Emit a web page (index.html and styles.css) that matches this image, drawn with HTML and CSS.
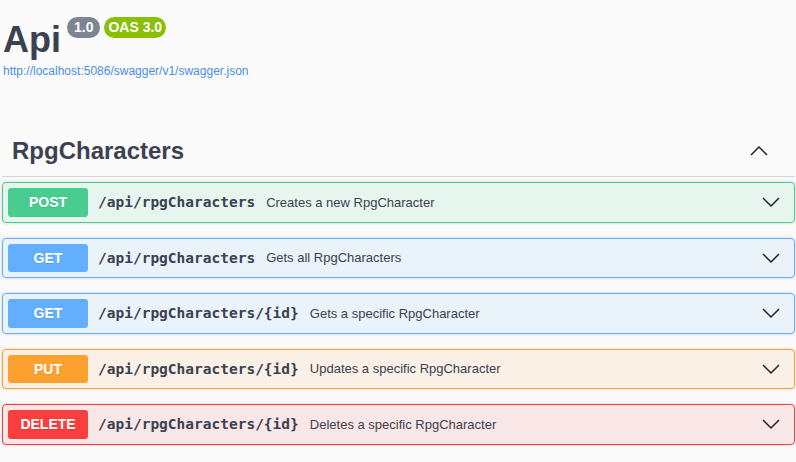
FILE: index.html
```html
<!DOCTYPE html>
<html>
<head>
<meta charset="utf-8">
<link rel="stylesheet" href="styles.css">
</head>
<body>
<div class="page">
  <div class="info">
    <h2 class="title">Api <span class="ver"><small class="badge gray">1.0</small><small class="badge green">OAS 3.0</small></span></h2>
    <a class="url" href="#">http://localhost:5086/swagger/v1/swagger.json</a>
  </div>
  <div class="tag">
    <h3 class="tag-title">RpgCharacters</h3>
    <svg class="arrow-up" width="20" height="20" viewBox="0 0 20 20"><path d="M2 14 L10 6 L18 14" fill="none" stroke="#222" stroke-width="1.5"/></svg>
  </div>
  <div class="ops">
    <div class="op post"><span class="method">POST</span><span class="path">/api/rpgCharacters</span><span class="desc">Creates a new RpgCharacter</span><svg class="arrow" width="20" height="20" viewBox="0 0 20 20"><path d="M2 6 L10 14 L18 6" fill="none" stroke="#222" stroke-width="1.5"/></svg></div>
    <div class="op get"><span class="method">GET</span><span class="path">/api/rpgCharacters</span><span class="desc">Gets all RpgCharacters</span><svg class="arrow" width="20" height="20" viewBox="0 0 20 20"><path d="M2 6 L10 14 L18 6" fill="none" stroke="#222" stroke-width="1.5"/></svg></div>
    <div class="op get"><span class="method">GET</span><span class="path">/api/rpgCharacters/{id}</span><span class="desc">Gets a specific RpgCharacter</span><svg class="arrow" width="20" height="20" viewBox="0 0 20 20"><path d="M2 6 L10 14 L18 6" fill="none" stroke="#222" stroke-width="1.5"/></svg></div>
    <div class="op put"><span class="method">PUT</span><span class="path">/api/rpgCharacters/{id}</span><span class="desc">Updates a specific RpgCharacter</span><svg class="arrow" width="20" height="20" viewBox="0 0 20 20"><path d="M2 6 L10 14 L18 6" fill="none" stroke="#222" stroke-width="1.5"/></svg></div>
    <div class="op delete"><span class="method">DELETE</span><span class="path">/api/rpgCharacters/{id}</span><span class="desc">Deletes a specific RpgCharacter</span><svg class="arrow" width="20" height="20" viewBox="0 0 20 20"><path d="M2 6 L10 14 L18 6" fill="none" stroke="#222" stroke-width="1.5"/></svg></div>
  </div>
</div>
</body>
</html>
```
FILE: styles.css
```css
html, body {
  margin: 0;
  padding: 0;
  background: #fafafa;
  font-family: "Liberation Sans", Arial, sans-serif;
  color: #3b4151;
}
.page {
  padding: 0 1px 0 2px;
}
.info {
  padding: 16px 0 0 1px;
}
.title {
  margin: 0;
  font-size: 36px;
  font-weight: 700;
  line-height: 48px;
  color: #3b4151;
  display: flex;
  align-items: flex-start;
}
.ver {
  display: inline-flex;
  gap: 4px;
  margin-left: 6px;
  margin-top: 1px;
}
.badge {
  font-size: 14px;
  font-weight: 700;
  color: #fff;
  border-radius: 57px;
  padding: 2px 4px;
  line-height: 17px;
}
.gray { background: #7d8492; padding: 2px 7px; }
.green { background: #89bf04; }
.url {
  display: block;
  font-size: 12px;
  color: #4990e2;
  text-decoration: none;
  line-height: 14px;
}
.tag {
  display: flex;
  align-items: center;
  justify-content: space-between;
  margin-top: 48px;
  padding: 10px 20px 10px 10px;
  border-bottom: 1px solid rgba(59,65,81,.2);
  margin-bottom: 5px;
}
.tag-title {
  margin: 0;
  font-size: 24px;
  font-weight: 700;
  line-height: 30px;
  color: #3b4151;
}
.arrow-up { margin-right: 9px; display: block; transform: translateX(3px); }
.op {
  display: flex;
  align-items: center;
  padding: 5px;
  border: 1px solid;
  border-radius: 4px;
  box-shadow: 0 0 3px rgba(0,0,0,.19);
  margin-bottom: 15px;
}
.method {
  min-width: 80px;
  text-align: center;
  height: 28.5px;
  line-height: 28.5px;
  font-size: 14px;
  font-weight: 700;
  color: #fff;
  border-radius: 3px;
  text-shadow: 0 1px 0 rgba(0,0,0,.1);
}
.path {
  font-family: "DejaVu Sans Mono", monospace;
  font-weight: 700;
  font-size: 14.5px;
  color: #3b4151;
  padding: 0 11px 0 10px;
}
.desc {
  font-size: 13px;
  color: #3b4151;
  flex: 1;
}
.arrow { margin-right: 8px; display: block; }
.post { background: rgba(73,204,144,.1); border-color: #49cc90; }
.post .method { background: #49cc90; }
.get { background: rgba(97,175,254,.1); border-color: #61affe; }
.get .method { background: #61affe; }
.put { background: rgba(252,161,48,.1); border-color: #fca130; }
.put .method { background: #fca130; }
.delete { background: rgba(249,62,62,.1); border-color: #f93e3e; }
.delete .method { background: #f93e3e; }
```
